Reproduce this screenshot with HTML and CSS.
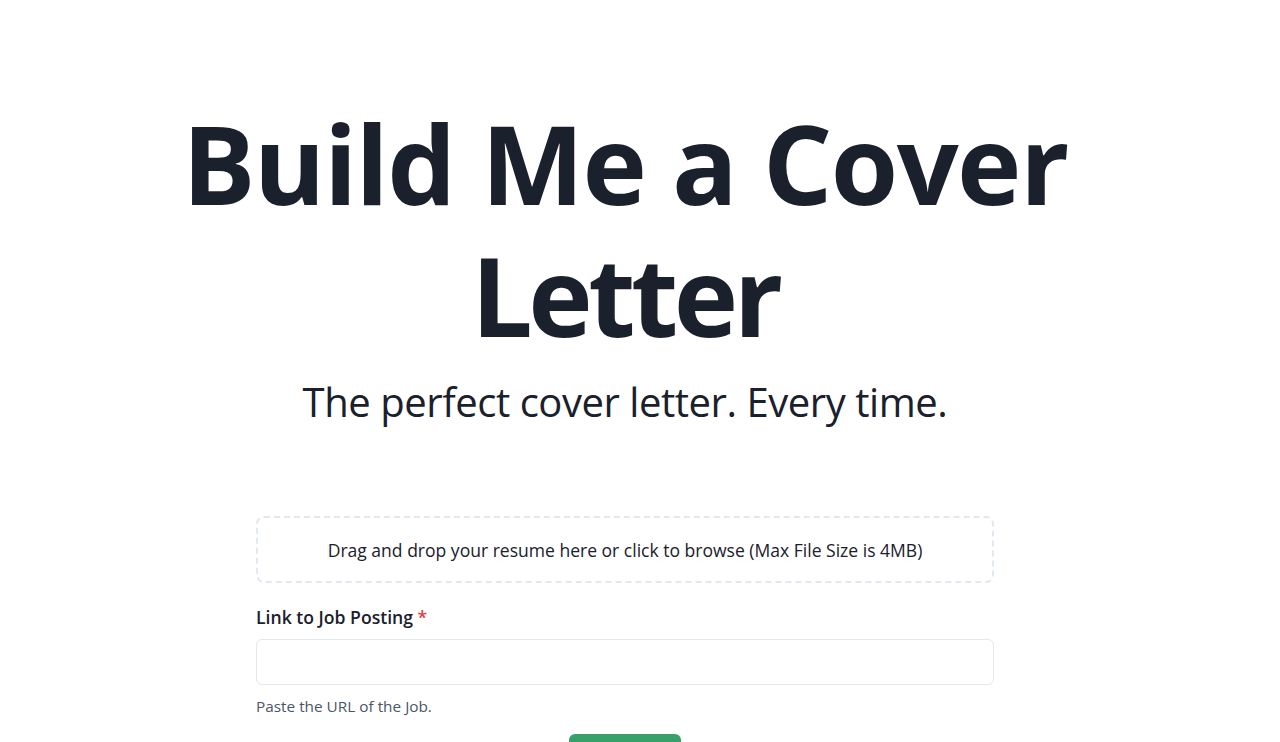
FILE: index.html
```html
<!DOCTYPE html>
<html lang="en">
<head>
<meta charset="utf-8">
<title>Build Me a Cover Letter</title>
<link rel="stylesheet" href="styles.css">
</head>
<body>
<main class="page">
  <header class="hero">
    <h1 class="hero-title"><span class="line">Build Me a Cover</span> <span class="line line-tight">Letter</span></h1>
    <p class="hero-sub">The perfect cover letter. Every time.</p>
  </header>
  <form class="form">
    <div class="dropzone">Drag and drop your resume here or click to browse (Max File Size is 4MB)</div>
    <div class="field">
      <label class="label" for="job">Link to Job Posting <span class="req">*</span></label>
      <input class="input" id="job" type="text">
      <p class="helper">Paste the URL of the Job.</p>
    </div>
    <div class="actions">
      <button class="btn" type="button">Generate</button>
    </div>
  </form>
</main>
</body>
</html>
```
FILE: styles.css
```css
* { box-sizing: border-box; }
html, body { margin: 0; padding: 0; background: #ffffff; }
body {
  font-family: "Open Sans", "Noto Sans", sans-serif;
  color: #1a202c;
}
.page {
  width: 1250px;
  display: flex;
  flex-direction: column;
  align-items: center;
  padding-top: 97px;
}
.hero { text-align: center; }
.hero-title {
  margin: 0;
  font-size: 109px;
  line-height: 132px;
  font-weight: 700;
  letter-spacing: -1.6px;
  color: #1a202c;
}
.line { display: block; }
.line-tight { letter-spacing: -4.5px; }
.hero-sub {
  margin: 17px 0 0;
  font-size: 40px;
  line-height: 48px;
  font-weight: 400;
  letter-spacing: -0.45px;
  color: #1a202c;
}
.form {
  width: 738px;
  margin-top: 90px;
  display: flex;
  flex-direction: column;
}
.dropzone {
  height: 67px;
  border: 2px dashed #e2e8f0;
  border-radius: 8px;
  display: flex;
  align-items: center;
  justify-content: center;
  font-size: 17.55px;
  color: #1a202c;
}
.field { margin-top: 22px; }
.label {
  display: block;
  font-size: 17.6px;
  font-weight: 600;
  line-height: 24px;
  margin-bottom: 10px;
}
.req { color: #e53e3e; }
.input {
  display: block;
  width: 100%;
  height: 46px;
  border: 1px solid #e2e8f0;
  border-radius: 6px;
  font: inherit;
  padding: 0 16px;
  outline: none;
}
.helper {
  margin: 10px 0 0;
  font-size: 15.35px;
  line-height: 22px;
  color: #4a5568;
}
.actions {
  display: flex;
  justify-content: center;
  margin-top: 17px;
}
.btn {
  width: 112px;
  height: 48px;
  border: none;
  border-radius: 6px;
  background: #38a169;
  color: #fff;
  font: inherit;
  font-weight: 600;
  font-size: 18px;
}
```
